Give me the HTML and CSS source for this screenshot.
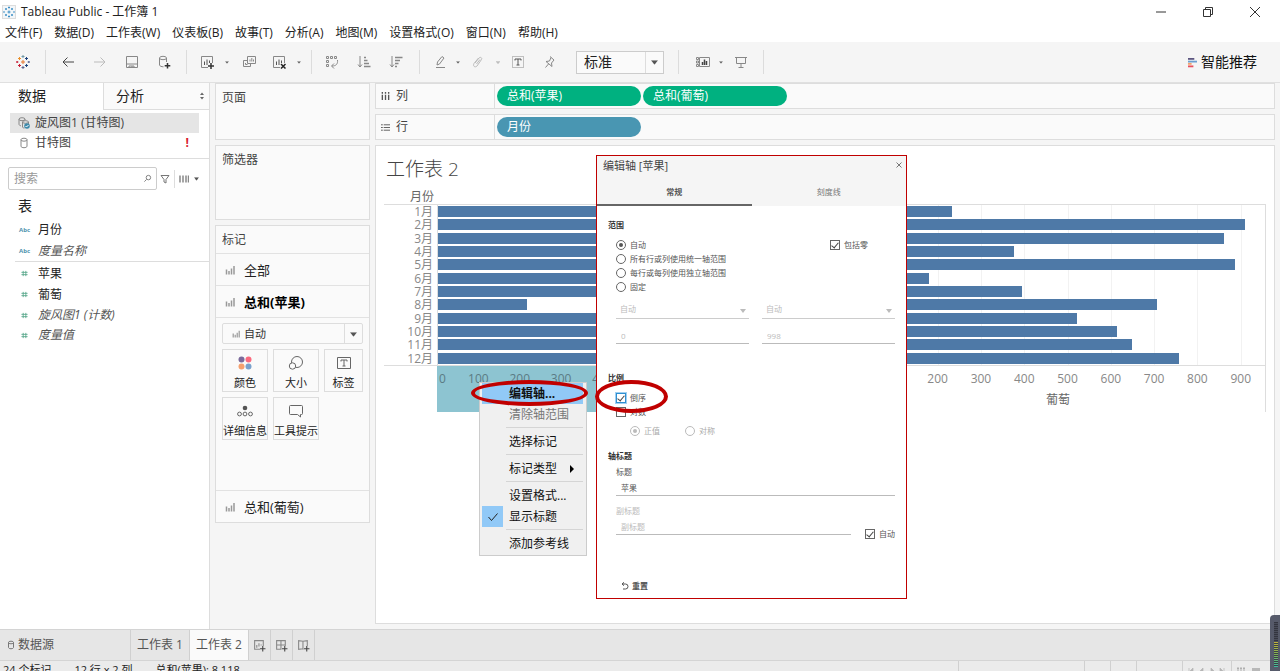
FILE: index.html
```html
<!DOCTYPE html>
<html lang="zh-CN">
<head>
<meta charset="utf-8">
<title>Tableau Public - 工作簿 1</title>
<link rel="stylesheet" href="styles.css">
</head>
<body>
<svg class="defs" aria-hidden="true">
  <symbol id="bars" viewBox="0 0 10 10"><path d="M1.5 4.5v5M4 6v3.500M6.500 3.500v6M9 1v8.500" stroke="#999" stroke-width="1.500" fill="none"/></symbol>
  <symbol id="hash" viewBox="0 0 8 8"><path d="M2.500 1v6M5.500 1v6M.5 2.700h7M.5 5.300h7" stroke="#59a88c" fill="none"/></symbol>
  <symbol id="caret" viewBox="0 0 6 4"><path d="M0 0h6L3 4z" fill="currentColor"/></symbol>
  <symbol id="logo" viewBox="0 0 14 14"><path d="M7 5v4M5 7h4" stroke="#e8762c"/><path d="M7 0v3M5.500 1.500h3" stroke="#7199a6"/><path d="M7 11v3M5.500 12.500h3" stroke="#5b6591"/><path d="M3.500 2v3M2 3.500h3" stroke="#eb912c"/><path d="M10.500 2v3M9 3.500h3" stroke="#1f447e"/><path d="M3.500 9v3M2 10.500h3" stroke="#c72037"/><path d="M10.500 9v3M9 10.500h3" stroke="#1f447e"/><path d="M1.200 6v2M0 7h2.400" stroke="#c72037"/><path d="M12.800 6v2M11.600 7H14" stroke="#5b6591"/></symbol>
</svg>

<header class="titlebar">
  <svg class="app-icon" viewBox="0 0 14 14"><rect x=".5" y=".5" width="13" height="13" fill="#f2f6f9" stroke="#ddd"/><g stroke="#3d8ec4" fill="none"><path d="M7 5.500v3M5.500 7h3M7 1.500v2M6 2.500h2M7 10.500v2M6 11.500h2M4 3v2M3 4h2M10 3v2M9 4h2M4 9v2M3 10h2M10 9v2M9 10h2M2 6v2M12 6v2"/></g></svg>
  <h1 class="app-title">Tableau Public - 工作簿 1</h1>
  <div class="window-buttons">
    <button aria-label="最小化"><svg viewBox="0 0 12 12"><path d="M1 6h10" stroke="#333"/></svg></button>
    <button aria-label="还原"><svg viewBox="0 0 12 12"><path d="M1.500 3.500h7v7h-7zM3.500 3.500v-2h7v7h-2" fill="none" stroke="#333"/></svg></button>
    <button aria-label="关闭"><svg viewBox="0 0 12 12"><path d="M1 1l10 10M11 1L1 11" stroke="#333"/></svg></button>
  </div>
</header>

<nav class="menubar">
  <button>文件(F)</button><button>数据(D)</button><button>工作表(W)</button><button>仪表板(B)</button><button>故事(T)</button><button>分析(A)</button><button>地图(M)</button><button>设置格式(O)</button><button>窗口(N)</button><button>帮助(H)</button>
</nav>

<div class="toolbar">
  <button class="tb w32" aria-label="起始页"><svg viewBox="0 0 14 14"><use href="#logo"/></svg></button>
  <span class="sep"></span>
  <button class="tb w32 strong" aria-label="撤消"><svg viewBox="0 0 14 14"><path d="M13 7H2M6.500 2.500L2 7l4.500 4.500"/></svg></button>
  <button class="tb w32 dim" aria-label="重做"><svg viewBox="0 0 14 14"><path d="M1 7h11M7.500 2.500L12 7l-4.500 4.500"/></svg></button>
  <button class="tb w32" aria-label="保存"><svg viewBox="0 0 14 14"><path d="M1.500 1.500h11v11h-11zM1.500 9h11M4 12.500V11h5v1.500M7 11v1.500"/></svg></button>
  <button class="tb w32" aria-label="新建数据源"><svg viewBox="0 0 14 14"><path d="M2.500 3v7c0 1 2 1.800 4 1.800M9.500 3v4"/><ellipse cx="6" cy="3" rx="3.500" ry="1.700"/><path d="M10.500 8v5.500M7.700 10.700h5.600" stroke="#333" stroke-width="1.500"/></svg></button>
  <span class="sep"></span>
  <button class="tb w28" aria-label="新建工作表"><svg viewBox="0 0 14 14"><path d="M8 12.500H1.500v-11h11V8"/><path d="M4.500 6.500V10M7 4.500V10M9.500 5.500V8" stroke="#555"/><path d="M11 8v6M8 11h6" stroke="#333" stroke-width="1.500"/></svg></button>
  <button class="tb w12" aria-label="更多"><svg class="caret" viewBox="0 0 6 4"><use href="#caret"/></svg></button>
  <button class="tb w32" aria-label="复制"><svg viewBox="0 0 14 14"><path d="M5.500 1.500h8v7h-8zM5 5.500H1.500v6h7V9M3.500 8v1.500h2M8 4.500v2M9.800 3v3.500M11.500 4.500v2"/></svg></button>
  <button class="tb w28" aria-label="清除工作表"><svg viewBox="0 0 14 14"><path d="M8 12.500H1.500v-11h11V8"/><path d="M4.500 6.500V10M7 4.500V10M9.500 5.500V8" stroke="#555"/><path d="M9 9l4.500 4.500M13.500 9L9 13.500" stroke="#222" stroke-width="1.500"/></svg></button>
  <button class="tb w12" aria-label="更多"><svg class="caret" viewBox="0 0 6 4"><use href="#caret"/></svg></button>
  <span class="sep"></span>
  <button class="tb w28" aria-label="交换行和列"><svg viewBox="0 0 14 14"><path d="M1.500 1.500h2v2h-2zM5.500 1.500h2v2h-2zM9.500 1.500h2v2h-2zM1.500 5.500h2v2h-2zM1.500 9.500h2v2h-2z"/><path d="M12.500 5c.5 4-1.500 6-5.500 6M9 8.500L6.500 11 9 13.500"/></svg></button>
  <button class="tb w36" aria-label="升序排序"><svg viewBox="0 0 14 14"><path d="M3 1v11M1 9.500L3 12l2-2.500"/><path d="M7 2.500h2M7 5.500h3.500M7 8.500h5M7 11.500h6.500" stroke-width="1.500"/></svg></button>
  <button class="tb w28" aria-label="降序排序"><svg viewBox="0 0 14 14"><path d="M3 1v11M1 9.500L3 12l2-2.500"/><path d="M6 2.500h7.500M6 5.500h5M6 8.500h3.500M6 11.500h2" stroke-width="1.500"/></svg></button>
  <span class="sep mid"></span>
  <button class="tb w28" aria-label="突出显示"><svg viewBox="0 0 14 14"><path d="M4 10l.5-3L9 1.500l2 1.500-4.500 6zM3 12.500h9"/></svg></button>
  <button class="tb w8" aria-label="更多"><svg class="caret" viewBox="0 0 6 4"><use href="#caret"/></svg></button>
  <button class="tb w32 dim" aria-label="组成员"><svg viewBox="0 0 14 14"><path d="M4 8l4-5c1.500-1.500 3.500 0 2.500 1.500L6 11c-2 2-4.500 0-3-2.500L7.500 3M5.500 9L9 4.500"/></svg></button>
  <button class="tb w8 dim" aria-label="更多"><svg class="caret" viewBox="0 0 6 4"><use href="#caret"/></svg></button>
  <button class="tb w32" aria-label="显示标记标签"><svg viewBox="0 0 14 14"><path d="M1.500 1.500h11v11h-11z" stroke-dasharray="1 1"/><path d="M4 5.500V4h6v1.500M7 4v6M5.500 10h3" stroke="#555"/></svg></button>
  <button class="tb w32" aria-label="固定轴"><svg viewBox="0 0 14 14"><path d="M7 1.500l4 3.500M8 2.500L6.500 6 3 6.500l6 5L8.500 8 11 5M5.500 9L2.500 12.500"/></svg></button>
  <div class="fit-select"><select aria-label="适合"><option>标准</option></select><svg class="arrow" viewBox="0 0 6 4"><use href="#caret"/></svg></div>
  <span class="sep wide"></span>
  <button class="tb w28" aria-label="显示/隐藏卡"><svg viewBox="0 0 14 14"><path d="M3.500 2.500h10v9h-10z"/><path d="M.5 2.500h2v2h-2zM.5 6h2v2h-2zM.5 9.500h2v2h-2z"/><path d="M6.500 7v3M8.500 4.500V10M10.500 6v4" stroke="#444" stroke-width="1.500"/></svg></button>
  <button class="tb w8" aria-label="更多"><svg class="caret" viewBox="0 0 6 4"><use href="#caret"/></svg></button>
  <button class="tb w32" aria-label="演示模式"><svg viewBox="0 0 14 14"><path d="M1 2.500h12M2.500 2.500v6h9v-6M7 8.500v4M4.500 12.500h5"/></svg></button>
  <span class="sep"></span>
  <button class="show-me"><svg viewBox="0 0 10 11"><path d="M0 1.500h7" stroke="#5c5680" stroke-width="2"/><path d="M0 4.500h10" stroke="#6b9fd0" stroke-width="2"/><path d="M0 7h4" stroke="#f4a26c" stroke-width="2"/><path d="M0 9.800h6" stroke="#e8505c" stroke-width="2"/></svg>智能推荐</button>
</div>

<main class="workspace">
  <aside class="data-pane">
    <div class="pane-tabs">
      <button class="pane-tab active">数据</button>
      <button class="pane-tab">分析<svg viewBox="0 0 6 8"><path d="M1 3l2-2.500L5 3zM1 5l2 2.500L5 5z" fill="#666"/></svg></button>
    </div>
    <ul class="sources">
      <li class="source selected"><svg viewBox="0 0 12 12"><g fill="none" stroke="#888"><ellipse cx="4" cy="2.200" rx="3" ry="1.500"/><path d="M1 2.200v5c0 1 1 1.500 2 1.600M7 2.200v1.300M4.500 5v5c0 .7 1 1 2 1M10.500 5v2"/><ellipse cx="7.500" cy="5" rx="3" ry="1.300"/></g><circle cx="9" cy="9" r="2.800" fill="#3e8aab"/><path d="M7.500 9l1 1 2-2" stroke="#fff" fill="none"/></svg>旋风图1 (甘特图)</li>
      <li class="source"><svg viewBox="0 0 12 12"><g fill="none" stroke="#888"><ellipse cx="6" cy="2.700" rx="3" ry="1.500"/><path d="M3 2.700v6.500c0 2 6 2 6 0V2.700"/></g></svg>甘特图<b class="alert">!</b></li>
    </ul>
    <div class="search-row">
      <div class="search"><input type="text" placeholder="搜索" aria-label="搜索"><svg viewBox="0 0 10 10"><circle cx="6" cy="4" r="2.500" fill="none" stroke="#777"/><path d="M4 6L1.500 8.500" stroke="#777"/></svg></div>
      <button aria-label="筛选"><svg class="i10" viewBox="0 0 10 10"><path d="M1 1.500h8L6 5.500V9L4 8V5.500z" fill="none" stroke="#777"/></svg></button>
      <span class="vline"></span>
      <button aria-label="视图"><svg class="i10" viewBox="0 0 10 10"><path d="M1 1.500v7M4 1.500v7M7 1.500v7M9.500 1.500v7" stroke="#888" stroke-width="1.500"/></svg></button>
      <button aria-label="更多"><svg class="caret" viewBox="0 0 6 4"><use href="#caret"/></svg></button>
    </div>
    <h2 class="tables">表</h2>
    <ul class="fields">
      <li><span class="abc">Abc</span>月份</li>
      <li class="gen"><span class="abc">Abc</span>度量名称</li>
    </ul>
    <ul class="fields measures">
      <li><svg viewBox="0 0 8 8"><use href="#hash"/></svg>苹果</li>
      <li><svg viewBox="0 0 8 8"><use href="#hash"/></svg>葡萄</li>
      <li class="gen"><svg viewBox="0 0 8 8"><use href="#hash"/></svg>旋风图1 (计数)</li>
      <li class="gen"><svg viewBox="0 0 8 8"><use href="#hash"/></svg>度量值</li>
    </ul>
  </aside>

  <section class="cards">
    <div class="card pages"><h3>页面</h3></div>
    <div class="card filters"><h3>筛选器</h3></div>
    <div class="card marks">
      <h3>标记</h3>
      <button class="mark-row"><svg viewBox="0 0 10 10"><use href="#bars"/></svg>全部</button>
      <button class="mark-row current"><svg viewBox="0 0 10 10"><use href="#bars"/></svg>总和(苹果)</button>
      <div class="mark-body">
        <div class="mark-type"><svg class="type-icon" viewBox="0 0 10 10"><use href="#bars"/></svg><select aria-label="标记类型"><option>自动</option></select><svg class="arrow" viewBox="0 0 6 4"><use href="#caret"/></svg></div>
        <div class="mark-grid">
          <button><svg viewBox="0 0 16 16"><circle cx="4.500" cy="4.500" r="3" fill="#7b6a9b"/><circle cx="11.500" cy="4.500" r="3" fill="#fb6a7e"/><circle cx="4.500" cy="11.500" r="3" fill="#f5a06f"/><circle cx="11.500" cy="11.500" r="3" fill="#7aa1cc"/></svg>颜色</button>
          <button><svg viewBox="0 0 16 16"><g fill="none" stroke="#666"><circle cx="9" cy="7" r="5.500"/><circle cx="4.500" cy="11" r="3.200" fill="#fafafa"/></g></svg>大小</button>
          <button><svg viewBox="0 0 16 16"><g fill="none" stroke="#666"><path d="M1.500 2.500h13v11h-13z"/><path d="M5 6.500V5h6v1.500M8 5v6M6.500 11h3"/></g></svg>标签</button>
          <button><svg viewBox="0 0 16 16"><circle cx="8" cy="5" r="2.300" fill="#555"/><g fill="none" stroke="#666"><circle cx="2.500" cy="11" r="1.900"/><circle cx="8" cy="11" r="1.900"/><circle cx="13.500" cy="11" r="1.900"/></g></svg>详细信息</button>
          <button><svg viewBox="0 0 16 16"><path d="M1.500 3.500q0-1 1-1h11q1 0 1 1v7q0 1-1 1h-1v2.500L9.500 11.500h-7q-1 0-1-1z" fill="none" stroke="#666"/></svg>工具提示</button>
        </div>
      </div>
      <button class="mark-row"><svg viewBox="0 0 10 10"><use href="#bars"/></svg>总和(葡萄)</button>
    </div>
  </section>

  <section class="view">
    <div class="shelf"><div class="shelf-name"><svg viewBox="0 0 10 10"><path d="M1.500 0v2M5 0v2M8.500 0v2M1.500 3v6M5 3v6M8.500 3v6" stroke="#555" stroke-width="1.500"/></svg>列</div><span class="pill green">总和(苹果)</span><span class="pill green">总和(葡萄)</span></div>
    <div class="shelf"><div class="shelf-name"><svg viewBox="0 0 10 10"><path d="M0 2h2M0 5h2M0 8h2M3 2h7M3 5h7M3 8h7" stroke="#555"/></svg>行</div><span class="pill blue">月份</span></div>

    <div class="sheet">
      <h2 class="sheet-title">工作表 2</h2>
      <div class="row-head">月份</div>
      <div class="chart">
        <div class="months"><span>1月</span><span>2月</span><span>3月</span><span>4月</span><span>5月</span><span>6月</span><span>7月</span><span>8月</span><span>9月</span><span>10月</span><span>11月</span><span>12月</span></div>
        <div class="pane apple">
          <i style="width:52%"></i><i style="width:64%"></i><i style="width:71%"></i><i style="width:58%"></i><i style="width:83%"></i><i style="width:55%"></i><i style="width:74%"></i><i style="width:21.5%"></i><i style="width:90%"></i><i style="width:78%"></i><i style="width:68%"></i><i style="width:95%"></i>
        </div>
        <div class="pane grape">
          <i style="width:24.4%"></i><i style="width:95.2%"></i><i style="width:90.1%"></i><i style="width:39.4%"></i><i style="width:92.8%"></i><i style="width:18.8%"></i><i style="width:41.2%"></i><i style="width:74%"></i><i style="width:54.6%"></i><i style="width:64.3%"></i><i style="width:67.8%"></i><i style="width:79.2%"></i>
        </div>
      </div>
      <div class="axes">
        <div class="axis-gap"></div>
        <div class="axis apple-axis"><div class="ticks"><span class="zero">0</span><span>100</span><span>200</span><span>300</span><span>400</span></div></div>
        <div class="axis grape-axis"><div class="ticks"><span>200</span><span>300</span><span>400</span><span>500</span><span>600</span><span>700</span><span>800</span><span>900</span></div><div class="axis-title">葡萄</div></div>
      </div>

      <div class="context-menu" role="menu">
        <button class="hot">编辑轴...</button>
        <button disabled>清除轴范围</button>
        <hr>
        <button>选择标记</button>
        <hr>
        <button>标记类型<svg class="sub" viewBox="0 0 4 8"><path d="M0 0l4 4-4 4z"/></svg></button>
        <hr>
        <button>设置格式...</button>
        <button><span class="tick"><svg viewBox="0 0 12 12"><path d="M1.500 6l3 3.500 6-7" fill="none" stroke="#222"/></svg></span>显示标题</button>
        <hr>
        <button>添加参考线</button>
      </div>

      <form class="dialog">
        <div class="dialog-head">
          <div class="dialog-title"><span>编辑轴 [苹果]</span><button type="button" aria-label="关闭"><svg viewBox="0 0 8 8"><path d="M1.500 1.500l5 5M6.500 1.500l-5 5" stroke="#777"/></svg></button></div>
          <div class="dialog-tabs"><button type="button" class="on">常规</button><button type="button">刻度线</button></div>
        </div>
        <div class="dialog-body">
          <h4>范围</h4>
          <div class="group range">
            <div>
              <label class="opt"><input type="radio" name="range" checked>自动</label>
              <label class="opt"><input type="radio" name="range">所有行或列使用统一轴范围</label>
              <label class="opt"><input type="radio" name="range">每行或每列使用独立轴范围</label>
              <label class="opt"><input type="radio" name="range">固定</label>
            </div>
            <label class="opt include-zero"><input type="checkbox" checked>包括零</label>
          </div>
          <div class="group bounds">
            <div class="line-select"><select disabled aria-label="固定开始"><option>自动</option></select><svg class="arrow" viewBox="0 0 6 4"><use href="#caret"/></svg></div>
            <div class="line-select"><select disabled aria-label="固定结束"><option>自动</option></select><svg class="arrow" viewBox="0 0 6 4"><use href="#caret"/></svg></div>
            <input class="line-input" type="text" value="0" disabled aria-label="开始值">
            <input class="line-input" type="text" value="998" disabled aria-label="结束值">
          </div>
          <h4 class="scale-title">比例</h4>
          <div class="group scale">
            <label class="opt"><input type="checkbox" class="focus" checked>倒序</label>
            <label class="opt"><input type="checkbox">对数</label>
            <div class="log-kind">
              <label class="opt"><input type="radio" name="log" checked disabled>正值</label>
              <label class="opt"><input type="radio" name="log" disabled>对称</label>
            </div>
          </div>
          <h4 class="axis-heading">轴标题</h4>
          <div class="group titles">
            <label for="t1">标题</label>
            <input id="t1" class="line-input short" type="text" value="苹果">
            <div class="subtitle">
              <div class="subtitle-field">
                <label for="t2">副标题</label>
                <input id="t2" class="line-input short" type="text" placeholder="副标题" disabled>
              </div>
              <label class="opt"><input type="checkbox" checked>自动</label>
            </div>
          </div>
          <button type="button" class="reset"><svg viewBox="0 0 8 8"><path d="M1 2h3.500a2.400 2.400 0 1 1 0 5H2M3 .3L1 2l2 1.700" fill="none" stroke="#555"/></svg>重置</button>
        </div>
      </form>

      <div class="ring ring-menu"></div>
      <div class="ring ring-check"></div>
    </div>
  </section>
</main>

<nav class="sheet-tabs">
  <button class="source-tab"><svg viewBox="0 0 8 10"><g fill="none" stroke="#777"><ellipse cx="4" cy="2.500" rx="2.500" ry="1.300"/><path d="M1.500 2.500v5c0 1.700 5 1.700 5 0v-5"/></g></svg>数据源</button>
  <button>工作表 1</button>
  <button class="active">工作表 2</button>
  <button class="new" aria-label="新建工作表"><svg viewBox="0 0 12 12"><path d="M6.500 9.500h-5v-8h8v5M3.500 5.500V8M5.500 4v3M7.500 5v1"/><path d="M9 6.500v5M6.500 9h5" stroke="#444"/></svg></button>
  <button class="new" aria-label="新建仪表板"><svg viewBox="0 0 12 12"><path d="M6 9.500H1.500v-8h8v5M1.500 5.500h8M5.500 1.500v8"/><path d="M9 6.500v5M6.500 9h5" stroke="#444"/></svg></button>
  <button class="new" aria-label="新建故事"><svg viewBox="0 0 12 12"><path d="M6 9.500L5.500 9l-4 .5v-8L5.500 2l4-.5v5M5.500 2v7"/><path d="M9 6.500v5M6.500 9h5" stroke="#444"/></svg></button>
</nav>

<footer class="status">
  <span>24 个标记</span><span>12 行 x 2 列</span><span>总和(苹果): 8,118</span>
  <div class="status-right">
    <i class="c126"></i><i class="c26"></i><i class="c26"></i><i class="c46"></i>
    <i class="c50"><svg viewBox="0 0 38 8" width="38" height="8"><path d="M1 1v6M5 1v6L2 4zM15 1v6l-3-3zM23 1v6l3-3zM32 1v6l3-3zM36 1v6" fill="#b5b5b5" stroke="#b5b5b5" stroke-width=".7"/></svg></i>
    <i class="c50"><svg viewBox="0 0 38 8" width="38" height="8"><path d="M0 1.500h8M0 4.500h8M0 7.500h8" stroke="#b0b0b0" stroke-width="2" stroke-dasharray="2 1"/><path d="M15 1h8v5h-8z" fill="#b8b8b8"/></svg></i>
  </div>
</footer>
<div class="meter" aria-hidden="true"><span class="off"></span><span class="on"></span></div>
</body>
</html>
```

FILE: styles.css
```css
* { box-sizing: border-box; }

body {
  margin: 0;
  height: 100vh;
  display: flex;
  flex-direction: column;
  overflow: hidden;
  background: #f5f5f5;
  color: #222;
  font: 12px/20px "Open Sans", "Noto Sans CJK SC", sans-serif;
}

h1, h2, h3, h4, ul, hr { margin: 0; padding: 0; font-weight: 400; }
ul { list-style: none; }
button, input, select { font: inherit; color: inherit; }
button { display: flex; align-items: center; border: 0; padding: 0; background: none; white-space: nowrap; }
select { appearance: none; border: 0; background: none; padding: 0; width: 100%; }
svg { flex: none; }
.defs { display: none; }

/* window chrome */
.titlebar { flex: none; display: flex; align-items: center; height: 23px; padding-left: 2px; background: #fff; }
.app-icon { width: 14px; height: 14px; margin-right: 5px; }
.app-title { flex: 1; font-size: 12px; }
.window-buttons { display: flex; margin-right: 2px; }
.window-buttons button { width: 47px; height: 22px; justify-content: center; }
.window-buttons svg { width: 12px; height: 12px; }
.menubar { flex: none; display: flex; gap: 12px; height: 19px; padding-left: 5px; background: #fff; }

/* toolbar */
.toolbar { flex: none; display: flex; align-items: center; height: 41px; padding-left: 7px; border-bottom: 1px solid #e0e0e0; }
.tb { justify-content: center; height: 24px; color: #666; }
.tb svg { width: 14px; height: 14px; fill: none; stroke: #888; }
.tb svg.caret { width: 4px; height: 3px; stroke: none; }
.tb.strong svg { stroke: #444; }
.tb.dim { color: #bbb; }
.tb.dim svg { stroke: #bbb; }
.w8 { width: 8px; }
.w12 { width: 12px; }
.w28 { width: 28px; }
.w32 { width: 32px; }
.w36 { width: 36px; }
.sep { width: 1px; height: 24px; margin: 0 6px; background: #dcdcdc; }
.sep.mid { margin-left: 9px; }
.sep.wide { margin-left: 14px; margin-right: 10px; }
.fit-select { position: relative; width: 88px; height: 23px; margin-left: 10px; border: 1px solid #ccc; background: #fafafa; }
.fit-select select { height: 21px; padding-left: 7px; font-size: 14px; line-height: 20px; }
.fit-select::after, .mark-type::after { content: ""; position: absolute; top: 0; bottom: 0; right: 17px; width: 1px; background: #ddd; }
.arrow { position: absolute; right: 5px; top: 50%; width: 7px; height: 5px; margin-top: -2px; color: #555; pointer-events: none; }
.show-me { margin-left: auto; margin-right: 23px; gap: 4px; font-size: 14px; color: #111; }
.show-me svg { width: 9px; height: 11px; }

/* data pane */
.workspace { flex: 1; min-height: 0; display: flex; }
.data-pane { width: 210px; flex: none; background: #fff; border-right: 1px solid #ddd; }
.pane-tabs { display: flex; height: 27px; }
.pane-tab { flex: 1; padding-left: 12px; font-size: 14px; background: #fafafa; border-bottom: 1px solid #ddd; border-left: 1px solid #ddd; }
.pane-tab.active { flex: none; width: 103px; padding-left: 18px; background: #fff; border-color: transparent; border-left: 0; }
.pane-tab svg { width: 6px; height: 8px; margin-left: auto; margin-right: 4px; }
.sources { padding: 3px 10px 5px; border-bottom: 1px solid #ddd; }
.source { display: flex; align-items: center; gap: 5px; height: 20px; padding: 0 10px 0 8px; color: #444; }
.source.selected { background: #e5e5e5; }
.source svg { width: 12px; height: 12px; }
.alert { margin-left: auto; color: #d8202f; }
.search-row { display: flex; align-items: center; gap: 3px; padding: 8px 8px 0; }
.search { display: flex; align-items: center; width: 149px; height: 23px; padding: 0 4px 0 5px; border: 1px solid #ccc; border-radius: 2px; }
.search input { flex: 1; min-width: 0; border: 0; padding: 0; outline: 0; }
.search input::placeholder { color: #999; opacity: 1; }
.search svg { width: 9px; height: 9px; }
.i10 { width: 10px; height: 10px; }
.vline { width: 1px; height: 18px; margin: 0 1px; background: #ddd; }
.search-row .caret { width: 5px; height: 4px; margin-left: 2px; color: #555; }
.tables { padding: 5px 18px 3px; font-size: 14px; line-height: 21px; color: #222; }
.fields { margin-left: 15px; color: #222; }
.fields li { display: flex; align-items: center; height: 21px; }
.fields svg { width: 7px; height: 7px; margin: 0 10px 0 6px; }
.abc { width: 19px; margin-left: 4px; font-size: 6px; font-weight: 700; color: #4e92ad; }
.measures { padding-top: 1px; border-top: 1px solid #ddd; }
.measures li:nth-child(n + 3) { height: 20px; }
.gen { font-style: italic; color: #555; }
.gen .abc { font-style: normal; }

/* cards */
.cards { flex: none; width: 165px; padding: 0 5px; display: flex; flex-direction: column; gap: 5px; }
.card { border: 1px solid #ddd; background: #fafafa; color: #444; }
.card h3 { padding: 4px 6px; font-size: 12px; }
.card.marks h3 { padding-bottom: 3px; }
.pages { height: 57px; }
.filters { height: 75px; }
.mark-row { width: 100%; height: 32px; padding-left: 9px; gap: 9px; border-top: 1px solid #e2e2e2; font-size: 13px; color: #222; }
.mark-row svg { width: 10px; height: 10px; }
.mark-row.current { font-weight: 700; color: #000; }
.mark-body { height: 173px; padding: 5px 6px 0; border-top: 1px solid #e2e2e2; }
.mark-type { position: relative; display: flex; align-items: center; height: 21px; padding-left: 9px; gap: 4px; border: 1px solid #ddd; border-radius: 2px; }
.mark-type select { font-size: 11px; line-height: 18px; color: #333; }
.type-icon { width: 8px; height: 8px; }
.mark-grid { display: grid; grid-template-columns: 46px 46px 39px; gap: 5px; margin-top: 5px; }
.mark-grid button { flex-direction: column; height: 43px; padding-top: 5px; gap: 3px; border: 1px solid #ddd; font-size: 11px; line-height: 18px; color: #222; }
.mark-grid svg { width: 16px; height: 16px; }

/* shelves */
.view { flex: 1; min-width: 0; display: flex; flex-direction: column; gap: 5px; padding-right: 5px; padding-bottom: 5px; }
.shelf { flex: none; display: flex; align-items: center; gap: 2px; height: 26px; border: 1px solid #ddd; background: #fafafa; color: #444; }
.shelf-name { display: flex; align-items: center; gap: 6px; width: 119px; height: 24px; padding-left: 5px; border-right: 1px solid #ddd; }
.shelf-name svg { width: 9px; height: 9px; }
.pill { width: 144px; height: 20px; padding-left: 10px; border-radius: 10px; color: #fff; }
.pill.green { background: #00b180; }
.pill.blue { background: #4996b2; }

/* worksheet */
.sheet { position: relative; flex: 1; padding: 9px 8px 0; border: 1px solid #ddd; background: #fff; }
.sheet-title { padding-left: 2px; font-size: 19px; line-height: 28px; font-weight: 300; color: #444; }
.row-head { width: 50px; margin-top: 7px; text-align: right; line-height: 14px; color: #666; }
.chart, .axes { display: grid; grid-template-columns: 53px 1fr 1fr; border-right: 1px solid #ddd; }
.chart { height: 162px; border-top: 1px solid #ddd; border-bottom: 1px solid #ddd; }
.months, .pane { display: grid; grid-template-rows: repeat(12, 1fr); align-items: center; }
.months { padding-right: 4px; text-align: right; line-height: 13px; color: #888; }
.pane i { display: block; height: 11px; background: #4e79a7; }
.apple { border-left: 1px solid #ddd; }
.grape { background: repeating-linear-gradient(90deg, #f2f2f2 0 1px, transparent 1px 10.46%); }
.axis { height: 46px; color: #888; }
.ticks { display: flex; padding-top: 3px; }
.ticks span { flex: 0 0 10.46%; text-align: center; }
.apple-axis { background: #8dc4d1; color: #5b7b84; }
.apple-axis .ticks span { flex-basis: 10%; }
.apple-axis .ticks span.zero { flex-basis: 5%; padding-left: 2px; text-align: left; }
.grape-axis .ticks span:first-child { margin-left: 15.7%; }
.axis-title { margin-top: 1px; text-align: center; color: #666; }

/* context menu */
.context-menu { position: absolute; left: 103px; top: 236px; width: 108px; padding: 0 3px 1px 2px; border: 1px solid #ccc; background: #f0f0f0; color: #111; }
.context-menu button { position: relative; width: 100%; height: 21px; padding-left: 27px; }
.context-menu button:disabled { color: #777; }
.context-menu .hot { background: #91c9f7; font-weight: 700; }
.context-menu hr { height: 1px; margin: 2px 0 3px 24px; border: 0; background: #d5d5d5; }
.tick { position: absolute; left: 0; top: 0; display: flex; align-items: center; justify-content: center; width: 21px; height: 21px; background: #91c9f7; }
.tick svg { width: 12px; height: 12px; }
.sub { width: 4px; height: 8px; margin-left: 13px; }

/* edit axis dialog */
.dialog { position: absolute; left: 220px; top: 9px; width: 311px; border: 1px solid #c00000; background: #fff; font-size: 8px; line-height: 12px; color: #555; }
.dialog-head { background: #f5f5f5; }
.dialog-title { display: flex; align-items: center; justify-content: space-between; height: 20px; padding: 0 3px 0 6px; font-size: 11px; color: #444; }
.dialog-title button { margin-bottom: 2px; }
.dialog-title svg { width: 8px; height: 8px; }
.dialog-tabs { display: flex; height: 30px; }
.dialog-tabs button { flex: 1; justify-content: center; padding-top: 3px; border-bottom: 2px solid transparent; color: #777; }
.dialog-tabs .on { border-color: #666; font-weight: 700; color: #555; }
.dialog-body { padding: 13px 11px 6px; }
.dialog h4 { font-size: 8px; font-weight: 700; color: #333; }
.group { padding-left: 8px; }
.opt { display: flex; align-items: center; gap: 4px; height: 14px; }
.opt input { appearance: none; flex: none; display: flex; align-items: center; justify-content: center; width: 10px; height: 10px; margin: 0; border: 1px solid #666; background: #fff; }
.opt input[type="radio"] { border-radius: 50%; }
.opt input[type="radio"]:checked::before { content: ""; width: 4px; height: 4px; border-radius: 50%; background: #555; }
.opt input[type="checkbox"]:checked::before { content: ""; width: 3px; height: 6px; margin-bottom: 1px; border: solid #444; border-width: 0 1px 1px 0; transform: rotate(40deg); }
.opt input.focus { border-color: #2f8fd0; box-shadow: 0 0 0 1px #9fd0f2; }
.opt:has(:disabled) { color: #aaa; }
.opt input:disabled { border-color: #bbb; }
.opt input[type="radio"]:disabled:checked::before { background: #bbb; }
.range { display: flex; justify-content: space-between; margin-top: 7px; }
.include-zero { margin-right: 27px; }
.bounds { display: grid; grid-template-columns: 1fr 1fr; gap: 5px 13px; margin-top: 5px; }
.line-select { position: relative; height: 20px; border-bottom: 1px solid #ccc; }
.line-select select { height: 19px; padding: 1px 0 0 4px; opacity: 1; color: #bbb; }
.line-select .arrow { right: 3px; width: 6px; height: 4px; margin-top: 0; color: #bbb; }
.line-input { width: 100%; height: 20px; padding: 3px 5px 0; border: 0; border-bottom: 1px solid #bbb; outline: 0; background: none; }
.line-input:disabled { color: #bbb; }
.line-input::placeholder { color: #bbb; opacity: 1; }
.line-input.short { height: 16px; padding-top: 0; }
.scale-title { margin-top: 28px; }
.scale { margin-top: 7px; }
.log-kind { display: flex; gap: 25px; margin-top: 5px; padding-left: 14px; }
.axis-heading { margin-top: 12px; }
.titles { display: flex; flex-direction: column; gap: 2px; margin-top: 4px; }
.subtitle { display: flex; align-items: flex-end; gap: 14px; margin-top: 7px; }
.subtitle-field { flex: 1; display: flex; flex-direction: column; gap: 2px; color: #bbb; }
.subtitle .opt { margin-bottom: -6px; }
.reset { gap: 3px; margin: 45px 0 0 13px; font-weight: 700; }
.reset svg { width: 8px; height: 8px; }

/* annotation rings */
.ring { position: absolute; border: 4px solid #c00000; border-radius: 50%; pointer-events: none; }
.ring-menu { left: 95px; top: 234px; width: 117px; height: 26px; }
.ring-check { left: 219px; top: 234px; width: 73px; height: 33px; }

/* bottom bars */
.sheet-tabs { flex: none; display: flex; height: 31px; border-top: 1px solid #d4d4d4; background: #e6e6e6; color: #555; }
.sheet-tabs button { padding: 0 6px; border-right: 1px solid #d0d0d0; }
.sheet-tabs .source-tab { width: 131px; padding-left: 7px; gap: 3px; }
.sheet-tabs .source-tab svg { width: 8px; height: 10px; }
.sheet-tabs .active { background: #fafafa; }
.sheet-tabs .new { padding: 0 4px; }
.sheet-tabs .new svg { width: 13px; height: 13px; fill: none; stroke: #888; }
.status { flex: none; display: flex; gap: 23px; height: 11px; padding-left: 3px; overflow: hidden; border-top: 1px solid #d4d4d4; background: #ebebeb; font-size: 11px; line-height: 18px; }
.status-right { display: flex; margin-left: auto; }
.status-right i { height: 11px; padding: 6px 0 0 5px; border-left: 1px solid #d0d0d0; line-height: 1px; }
.c126 { width: 126px; }
.c26 { width: 26px; }
.c46 { width: 46px; }
.c50 { width: 49px; }
.meter { position: fixed; right: 0; bottom: 0; display: flex; flex-direction: column; width: 10px; height: 56px; padding: 7px 2px 4px 4px; border-radius: 4px 0 0 0; background: #565a6a; }
.meter .off { height: 20px; background: repeating-linear-gradient(#33353f 0 1px, #4a4d5a 1px 2px); }
.meter .on { flex: 1; background: repeating-linear-gradient(transparent 0 1px, #3a4048 1px 2px), linear-gradient(#c2b23c, #7fb255, #3fb8a0); }
```
